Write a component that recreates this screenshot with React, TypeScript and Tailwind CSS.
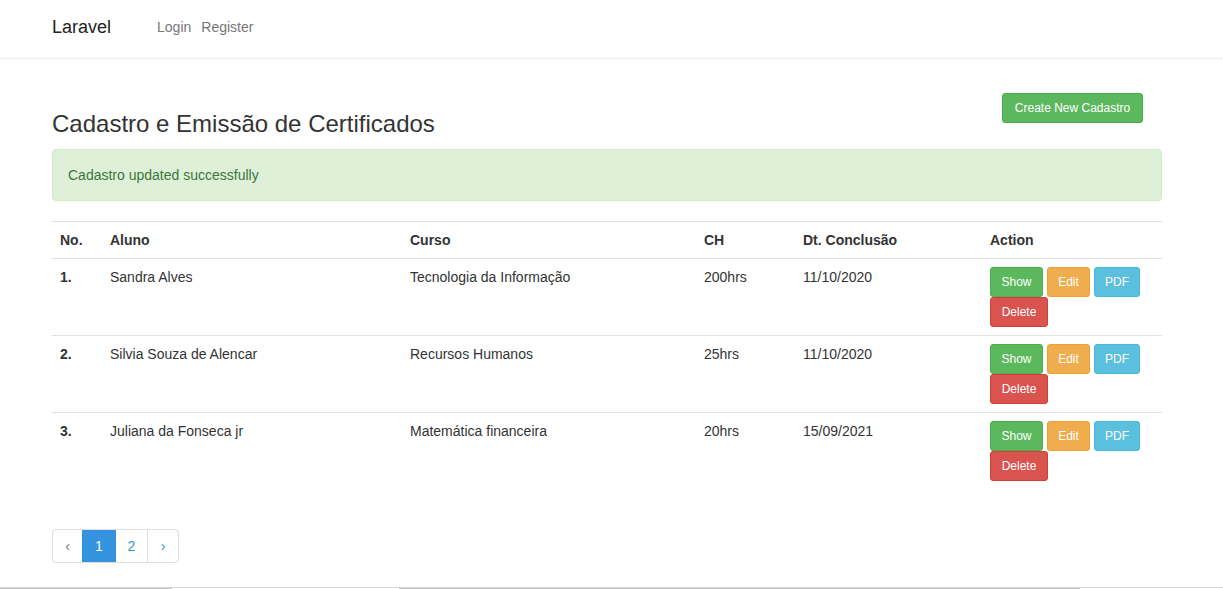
import React from 'react'

const rows = [
  { no: '1.', aluno: 'Sandra Alves', curso: 'Tecnologia da Informação', ch: '200hrs', data: '11/10/2020' },
  { no: '2.', aluno: 'Silvia Souza de Alencar', curso: 'Recursos Humanos', ch: '25hrs', data: '11/10/2020' },
  { no: '3.', aluno: 'Juliana da Fonseca jr', curso: 'Matemática financeira', ch: '20hrs', data: '15/09/2021' },
]

const btn = 'h-[30px] px-[10px] rounded-[3px] border text-[12px] leading-[18px] text-white'

export default function App() {
  return (
    <div className="min-h-[589px] bg-white text-[14px] leading-[20px] text-[#333] font-['Liberation_Sans',Arial,sans-serif] flex flex-col">
      {/* Navbar */}
      <nav className="h-[60px] border-b-[3px] border-[#f6f6f6] bg-white flex items-center pl-[52px] pb-[4px]">
        <span className="text-[18px] text-[#222] mr-[46px]">Laravel</span>
        <a className="text-[#777] mr-[10px]">Login</a>
        <a className="text-[#777]">Register</a>
      </nav>

      <div className="ml-[52px] w-[1110px] pt-[33px]">
        {/* Title row */}
        <div className="flex items-start justify-between">
          <h2 className="mt-[18px] text-[24px] leading-[26px] text-[#333]">Cadastro e Emissão de Certificados</h2>
          <button className="mr-[19px] h-[30px] w-[141px] rounded-[3px] border border-[#4cae4c] bg-[#5cb85c] text-[12px] text-white">
            Create New Cadastro
          </button>
        </div>

        {/* Alert */}
        <div className="mt-[12px] rounded-[4px] border border-[#d6e9c6] bg-[#dff0d8] px-[15px] py-[15px] text-[#3c763d]">
          Cadastro updated successfully
        </div>

        {/* Table */}
        <table className="mt-[20px] w-full border-collapse table-fixed">
          <colgroup>
            <col className="w-[50px]" />
            <col className="w-[300px]" />
            <col className="w-[294px]" />
            <col className="w-[99px]" />
            <col className="w-[187px]" />
            <col className="w-[180px]" />
          </colgroup>
          <thead>
            <tr className="border-t border-b border-[#e2e2e2] text-left">
              <th className="p-[8px] font-bold">No.</th>
              <th className="p-[8px] font-bold">Aluno</th>
              <th className="p-[8px] font-bold">Curso</th>
              <th className="p-[8px] font-bold">CH</th>
              <th className="p-[8px] font-bold">Dt. Conclusão</th>
              <th className="p-[8px] font-bold">Action</th>
            </tr>
          </thead>
          <tbody>
            {rows.map((r) => (
              <tr key={r.no} className="border-t border-[#e2e2e2] align-top">
                <td className="p-[8px] font-bold">{r.no}</td>
                <td className="p-[8px]">{r.aluno}</td>
                <td className="p-[8px]">{r.curso}</td>
                <td className="p-[8px]">{r.ch}</td>
                <td className="p-[8px]">{r.data}</td>
                <td className="p-[8px]">
                  <div className="flex flex-wrap gap-x-[4px] w-[152px]">
                    <button className={`${btn} w-[53px] border-[#4cae4c] bg-[#5cb85c]`}>Show</button>
                    <button className={`${btn} w-[43px] border-[#eea236] bg-[#f0ad4e]`}>Edit</button>
                    <button className={`${btn} w-[46px] border-[#46b8da] bg-[#5bc0de]`}>PDF</button>
                    <button className={`${btn} w-[58px] border-[#d43f3a] bg-[#d9534f]`}>Delete</button>
                  </div>
                </td>
              </tr>
            ))}
          </tbody>
        </table>

        {/* Pagination */}
        <div className="mt-[40px] flex h-[34px] w-fit rounded-[4px] border border-[#ddd] text-[14px]">
          <span className="flex w-[29px] items-center justify-center text-[#777]">‹</span>
          <span className="flex w-[34px] items-center justify-center bg-[#3592de] text-white">1</span>
          <span className="flex w-[32px] items-center justify-center text-[#3097d1] border-r border-[#ddd]">2</span>
          <span className="flex w-[30px] items-center justify-center text-[#3097d1]">›</span>
        </div>
      </div>

      {/* Bottom strip */}
      <div className="mt-auto flex items-start h-[2px] border-t border-[#d6d6d6]">
        <div className="w-[172px] h-[1px] bg-[#c9c9c9]" />
        <div className="w-[227px]" />
        <div className="w-[681px] h-[1px] bg-[#c9c9c9]" />
      </div>
    </div>
  )
}
